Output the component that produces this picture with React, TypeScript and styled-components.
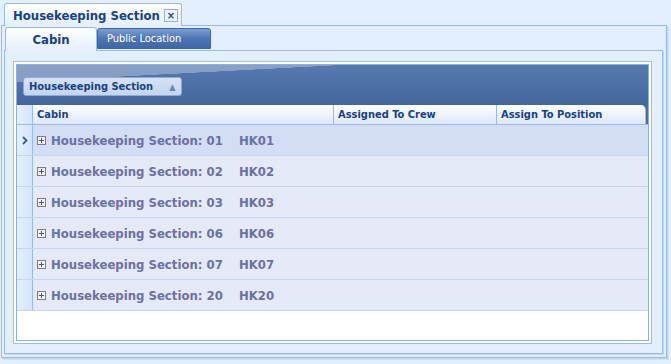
import React from 'react'
import styled, { createGlobalStyle } from 'styled-components'

const GlobalStyle = createGlobalStyle`
  html, body {
    margin: 0;
    padding: 0;
    background: #e4effd;
  }
  body {
    font-family: 'DejaVu Sans Condensed', 'DejaVu Sans', sans-serif;
  }
`

const Page = styled.div`
  width: 671px;
  height: 364px;
  background: #e4effd;
  overflow: hidden;
  box-sizing: border-box;
`

const DocTabs = styled.div`
  display: flex;
  height: 25px;
  padding: 3px 0 0 4px;
  box-sizing: border-box;
`

const DocTab = styled.div`
  display: flex;
  align-items: center;
  justify-content: space-between;
  width: 178px;
  height: 23px;
  padding: 0 3px 0 8px;
  box-sizing: border-box;
  border: 1px solid #99bbe8;
  border-bottom: none;
  border-radius: 3px 3px 0 0;
  background: linear-gradient(#ffffff, #e4effd);
  color: #15428b;
  font-weight: bold;
  font-size: 13px;
  white-space: nowrap;
  margin-bottom: -1px;
  position: relative;
  z-index: 1;
`

const CloseBox = styled.span`
  display: flex;
  align-items: center;
  justify-content: center;
  flex: none;
  width: 14px;
  height: 13px;
  box-sizing: border-box;
  border: 1px solid #8db2e3;
  background: #eef4fd;
  color: #15428b;
  font-size: 11px;
  line-height: 1;
`

const DocPanel = styled.div`
  margin: 0 4px 0 1px;
  height: 333px;
  box-sizing: border-box;
  border: 1px solid #99bbe8;
  box-shadow: 1px 1px 0 #c0d4f0, 2px 2px 0 #d3e2f7;
  padding: 1px 3px 3px 2px;
  display: flex;
  flex-direction: column;
`

const TabStrip = styled.div`
  display: flex;
  align-items: flex-end;
  height: 23px;
  padding-left: 1px;
`

const Tab = styled.div<{ $active?: boolean }>`
  display: flex;
  align-items: center;
  justify-content: ${({ $active }) => ($active ? 'center' : 'flex-start')};
  box-sizing: border-box;
  border-radius: 3px 3px 0 0;
  ${({ $active }) =>
    $active
      ? `
    width: 92px;
    height: 24px;
    border: 1px solid #99bbe8;
    border-bottom: none;
    background: linear-gradient(#ffffff, #e4effd);
    color: #15428b;
    font-weight: bold;
    font-size: 13px;
    margin-bottom: -1px;
    position: relative;
    z-index: 1;
  `
      : `
    width: 114px;
    height: 21px;
    margin-bottom: 1px;
    padding-left: 9px;
    border: 1px solid #3f66a3;
    background: linear-gradient(#7c9fd3, #4d76b5 50%, #3f67a8);
    color: #ffffff;
    font-size: 11px;
  `}
`

const TabPanel = styled.div`
  flex: 1;
  box-sizing: border-box;
  border: 1px solid #99bbe8;
  box-shadow: 1px 1px 0 #c5d8f2;
  padding: 10px 10px 9px 8px;
  display: flex;
  flex-direction: column;
`

const GridOuter = styled.div`
  flex: 1;
  border: 1px solid #a3bfe6;
  padding: 2px;
  background: #ffffff;
  display: flex;
  flex-direction: column;
`

const GridInner = styled.div`
  flex: 1;
  border: 1px solid #8eafdf;
  background: #ffffff;
  display: flex;
  flex-direction: column;
  overflow: hidden;
`

const GroupPanel = styled.div`
  height: 40px;
  padding: 10px 0 0 6px;
  box-sizing: border-box;
  position: relative;
  background: linear-gradient(#5679ae, #4b6fa5 60%, #44679d);
  &::before {
    content: '';
    position: absolute;
    inset: 0;
    background: linear-gradient(177deg, rgba(255, 255, 255, 0.3) 0 23%, rgba(255, 255, 255, 0) 23.5%);
    pointer-events: none;
  }
`

const GroupButton = styled.div`
  position: relative;
  display: inline-flex;
  align-items: center;
  gap: 16px;
  height: 19px;
  width: 159px;
  box-sizing: border-box;
  padding-left: 5px;
  border-radius: 3px;
  border: 1px solid #8eaad3;
  background: linear-gradient(#d6e2f3, #c4d5ee);
  color: #15428b;
  font-weight: bold;
  font-size: 11px;
`

const SortArrow = styled.span`
  color: #6a86b3;
  font-size: 9px;
`

const HeaderRow = styled.div`
  display: flex;
  height: 20px;
  box-sizing: border-box;
  border-bottom: 1px solid #99bbe8;
  background: #4a6ea4;
`

const HeaderInner = styled.div`
  display: flex;
  flex: 1;
  margin-right: 2px;
  background: linear-gradient(#ffffff, #dce8f9);
  border-radius: 0 5px 0 0;
  border-right: 1px solid #99bbe8;
`

const HeaderCell = styled.div<{ $w?: number }>`
  display: flex;
  align-items: center;
  box-sizing: border-box;
  ${({ $w }) => ($w ? `width: ${$w}px;` : 'flex: 1;')}
  padding-left: 4px;
  border-right: 1px solid #99bbe8;
  color: #15428b;
  font-weight: bold;
  font-size: 11px;
  &:last-child {
    border-right: none;
  }
`

const Indicator = styled.div`
  width: 16px;
  flex: none;
  box-sizing: border-box;
  border-right: 1px solid #99bbe8;
  background: linear-gradient(90deg, #e6f0fd, #d5e4fa);
  display: flex;
  align-items: center;
  justify-content: center;
  color: #3b5f95;
`

const Row = styled.div<{ $selected?: boolean }>`
  display: flex;
  height: 31px;
  box-sizing: border-box;
  border-bottom: 1px solid #c6d5ee;
  background: ${({ $selected }) => ($selected ? '#d3ddf4' : '#e4eaf8')};
`

const GroupCell = styled.div`
  flex: 1;
  display: flex;
  align-items: center;
  padding-left: 4px;
  color: #6c70a6;
  font-weight: bold;
  font-size: 13px;
`

const Expander = styled.span`
  width: 9px;
  height: 9px;
  box-sizing: border-box;
  border: 1px solid #7c7c8c;
  background: #f4f6fb;
  position: relative;
  margin-right: 5px;
  &::before,
  &::after {
    content: '';
    position: absolute;
    background: #55556a;
  }
  &::before {
    left: 1px;
    right: 1px;
    top: 3px;
    height: 1px;
  }
  &::after {
    top: 1px;
    bottom: 1px;
    left: 3px;
    width: 1px;
  }
`

const SectionName = styled.span`
  width: 188px;
  white-space: nowrap;
`

const EmptySpace = styled.div`
  flex: 1;
  background: #ffffff;
`

const sections = ['01', '02', '03', '06', '07', '20']

export default function App() {
  return (
    <Page>
      <GlobalStyle />
      <DocTabs>
        <DocTab>
          Housekeeping Section
          <CloseBox>×</CloseBox>
        </DocTab>
      </DocTabs>
      <DocPanel>
        <TabStrip>
          <Tab $active>Cabin</Tab>
          <Tab>Public Location</Tab>
        </TabStrip>
        <TabPanel>
          <GridOuter>
            <GridInner>
              <GroupPanel>
                <GroupButton>
                  Housekeeping Section
                  <SortArrow>▲</SortArrow>
                </GroupButton>
              </GroupPanel>
              <HeaderRow>
                <HeaderInner>
                  <Indicator />
                  <HeaderCell $w={301}>Cabin</HeaderCell>
                  <HeaderCell $w={163}>Assigned To Crew</HeaderCell>
                  <HeaderCell>Assign To Position</HeaderCell>
                </HeaderInner>
              </HeaderRow>
              {sections.map((s, i) => (
                <Row key={s} $selected={i === 0}>
                  <Indicator>
                    {i === 0 && (
                      <svg width="6" height="9" viewBox="0 0 6 9">
                        <path d="M1 1 L4.5 4.5 L1 8" stroke="#3b5f95" strokeWidth="1.8" fill="none" />
                      </svg>
                    )}
                  </Indicator>
                  <GroupCell>
                    <Expander />
                    <SectionName>Housekeeping Section: {s}</SectionName>
                    <span>HK{s}</span>
                  </GroupCell>
                </Row>
              ))}
              <EmptySpace />
            </GridInner>
          </GridOuter>
        </TabPanel>
      </DocPanel>
    </Page>
  )
}
